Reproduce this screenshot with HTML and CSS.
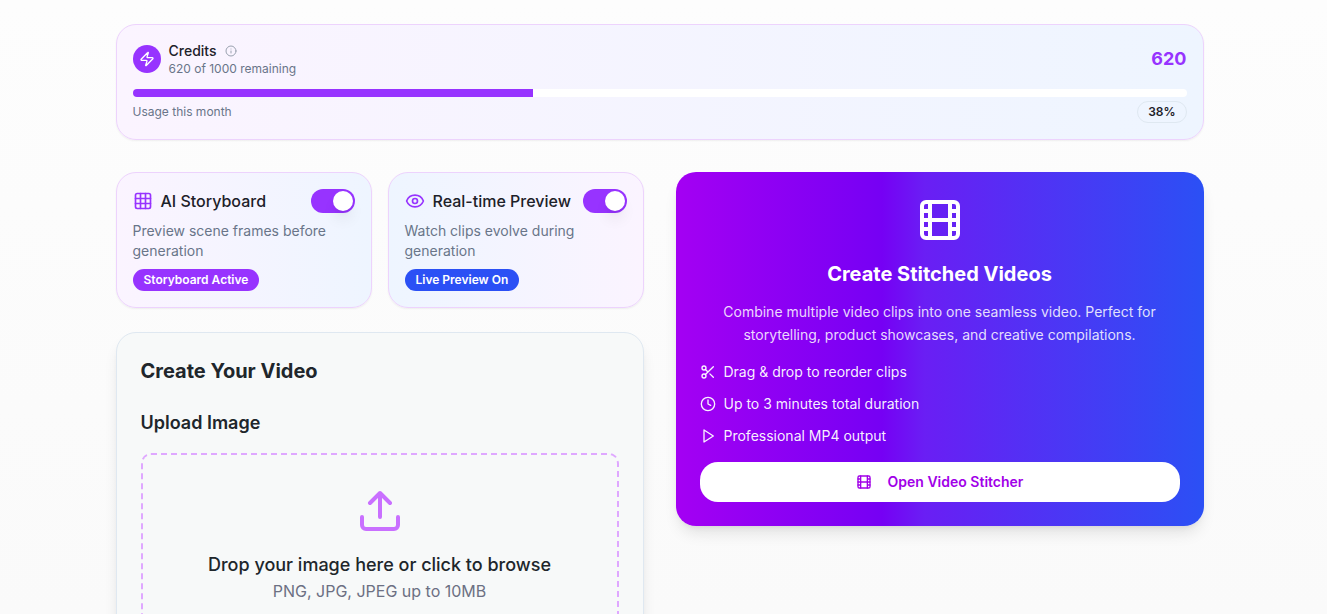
FILE: index.html
```html
<!DOCTYPE html>
<html lang="en">
<head>
<meta charset="utf-8">
<meta name="viewport" content="width=device-width, initial-scale=1">
<title>Create Your Video</title>
<link rel="stylesheet" href="styles.css">
</head>
<body>
<svg class="sprite" aria-hidden="true">
  <symbol id="film" viewBox="0 0 24 24"><rect width="18" height="18" x="3" y="3" rx="2"/><path d="M7 3v18M3 7.5h4M3 12h18M3 16.5h4M17 3v18M17 7.5h4M17 16.5h4"/></symbol>
</svg>
<main class="page">
  <section class="card credits">
    <div class="credits-head">
      <span class="credits-icon"><svg class="icon icon-16" viewBox="0 0 24 24"><path d="M4 14a1 1 0 0 1-.78-1.63l9.9-10.2a.5.5 0 0 1 .86.46l-1.92 6.02A1 1 0 0 0 13 10h7a1 1 0 0 1 .78 1.63l-9.9 10.2a.5.5 0 0 1-.86-.46l1.92-6.02A1 1 0 0 0 11 14z"/></svg></span>
      <div class="credits-text">
        <h2 class="credits-title">Credits <svg class="icon icon-12 info" viewBox="0 0 24 24"><circle cx="12" cy="12" r="10"/><path d="M12 16v-4M12 8h.01"/></svg></h2>
        <p class="small">620 of 1000 remaining</p>
      </div>
      <strong class="credits-total">620</strong>
    </div>
    <div class="bar" role="progressbar" aria-label="Usage this month" aria-valuenow="38" aria-valuemin="0" aria-valuemax="100"><div class="bar-fill" style="width:38%"></div></div>
    <div class="usage"><span class="small">Usage this month</span><span class="badge badge-outline">38%</span></div>
  </section>

  <div class="columns">
    <div class="left">
      <div class="features">
        <section class="card feature">
          <div class="feature-head">
            <svg class="icon icon-20 purple" viewBox="0 0 24 24"><rect width="18" height="18" x="3" y="3" rx="2"/><path d="M3 9h18M3 15h18M9 3v18M15 3v18"/></svg>
            <label class="feature-title" for="storyboard">AI Storyboard</label>
            <input class="switch" type="checkbox" role="switch" id="storyboard" checked>
          </div>
          <p class="feature-text">Preview scene frames before generation</p>
          <span class="badge badge-purple">Storyboard Active</span>
        </section>
        <section class="card feature feature-reverse">
          <div class="feature-head">
            <svg class="icon icon-20 purple" viewBox="0 0 24 24"><path d="M2.062 12.348a1 1 0 0 1 0-.696 10.75 10.75 0 0 1 19.876 0 1 1 0 0 1 0 .696 10.75 10.75 0 0 1-19.876 0"/><circle cx="12" cy="12" r="3"/></svg>
            <label class="feature-title" for="preview">Real-time Preview</label>
            <input class="switch" type="checkbox" role="switch" id="preview" checked>
          </div>
          <p class="feature-text">Watch clips evolve during generation</p>
          <span class="badge badge-blue">Live Preview On</span>
        </section>
      </div>
      <section class="create">
        <h1 class="create-title">Create Your Video</h1>
        <h2 class="upload-title">Upload Image</h2>
        <label class="dropzone">
          <input class="file" type="file" accept="image/png,image/jpeg">
          <svg class="icon icon-48 drop-icon" viewBox="0 0 24 24"><path d="M12 3v12M17 8l-5-5-5 5M21 15v4a2 2 0 0 1-2 2H5a2 2 0 0 1-2-2v-4"/></svg>
          <span class="drop-title">Drop your image here or click to browse</span>
          <span class="drop-hint">PNG, JPG, JPEG up to 10MB</span>
        </label>
      </section>
    </div>

    <section class="stitch">
      <svg class="icon icon-48 stitch-icon"><use href="#film"/></svg>
      <h2 class="stitch-title">Create Stitched Videos</h2>
      <p class="stitch-text">Combine multiple video clips into one seamless video. Perfect for storytelling, product showcases, and creative compilations.</p>
      <ul class="stitch-list">
        <li><svg class="icon icon-16" viewBox="0 0 24 24"><circle cx="6" cy="6" r="3"/><path d="M8.12 8.12 12 12M20 4 8.12 15.88"/><circle cx="6" cy="18" r="3"/><path d="M14.8 14.8 20 20"/></svg>Drag &amp; drop to reorder clips</li>
        <li><svg class="icon icon-16" viewBox="0 0 24 24"><circle cx="12" cy="12" r="10"/><path d="M12 6v6l4 2"/></svg>Up to 3 minutes total duration</li>
        <li><svg class="icon icon-16" viewBox="0 0 24 24"><path d="M6 3l14 9-14 9z"/></svg>Professional MP4 output</li>
      </ul>
      <button class="stitch-button" type="button"><svg class="icon icon-16"><use href="#film"/></svg>Open Video Stitcher</button>
    </section>
  </div>
</main>
</body>
</html>
```
FILE: styles.css
```css
* { box-sizing: border-box; }

html { overflow: hidden; }

body {
  margin: 0;
  padding-right: 8px;
  min-height: 100vh;
  background: linear-gradient(#fdfdfd, #fafafa) fixed;
  color: #1d2129;
  font-family: Inter, "Liberation Sans", sans-serif;
  font-size: 14px;
  line-height: 20px;
}

h1, h2, p, ul { margin: 0; padding: 0; }

.sprite { position: absolute; width: 0; height: 0; }

.icon {
  flex: none;
  fill: none;
  stroke: currentColor;
  stroke-width: 2;
  stroke-linecap: round;
  stroke-linejoin: round;
}
.icon-12 { width: 12px; height: 12px; }
.icon-16 { width: 16px; height: 16px; }
.icon-20 { width: 20px; height: 20px; }
.icon-48 { width: 48px; height: 48px; }
.purple { color: #9733ff; }

.page {
  max-width: 1152px;
  margin: 0 auto;
  padding: 24px 32px;
}

.card {
  padding: 16px;
  border: 1px solid #edd3fd;
  border-radius: 20px;
  background: linear-gradient(90deg, #fbf4ff, #eef5ff);
  box-shadow: 0 1px 2px rgba(0, 0, 0, .06);
}

.credits { margin-bottom: 32px; }
.credits-head { display: flex; align-items: center; gap: 8px; margin-bottom: 12px; }
.credits-icon {
  display: grid;
  place-items: center;
  width: 28px;
  height: 28px;
  border-radius: 50%;
  background: #9733ff;
  color: #fff;
}
.credits-text { flex: 1; }
.credits-title { display: flex; align-items: center; gap: 8px; font-size: 14px; font-weight: 500; }
.info { color: #99a1af; }
.small { color: #697589; font-size: 12px; line-height: 16px; }
.credits-total { color: #9733ff; font-size: 18px; line-height: 28px; font-weight: 700; }

.bar { height: 8px; margin-bottom: 4px; overflow: hidden; border-radius: 4px; background: #fff; }
.bar-fill { height: 100%; background: #9733ff; }
.usage { display: flex; align-items: center; justify-content: space-between; }

.badge {
  display: inline-block;
  padding: 2px 10px;
  border: 1px solid transparent;
  border-radius: 11px;
  color: #fff;
  font-size: 12px;
  line-height: 16px;
  font-weight: 600;
}
.badge-outline { border-color: #dfe8f1; color: #1d2129; }
.badge-purple { background: #9733ff; }
.badge-blue { background: #2b50f5; }

.columns { display: grid; grid-template-columns: 1fr 1fr; gap: 32px; align-items: start; }
.left { display: grid; gap: 24px; }
.features { display: grid; grid-template-columns: 1fr 1fr; gap: 16px; }

.feature { display: flex; flex-direction: column; align-items: flex-start; gap: 8px; }
.feature-reverse { background: linear-gradient(90deg, #eef5ff, #fbf4ff); }
.feature-head { display: flex; align-items: center; gap: 8px; width: 100%; }
.feature-title { flex: 1; font-size: 16px; line-height: 24px; font-weight: 500; white-space: nowrap; }
.feature-text { color: #697589; }

.switch {
  appearance: none;
  display: flex;
  flex: none;
  width: 44px;
  height: 24px;
  margin: 0;
  padding: 2px;
  border-radius: 12px;
  background: #ccd3dd;
  cursor: pointer;
}
.switch::before {
  content: "";
  width: 20px;
  height: 20px;
  border-radius: 50%;
  background: #fff;
  box-shadow: 0 10px 15px -3px rgba(0, 0, 0, .1), 0 4px 6px -4px rgba(0, 0, 0, .1);
}
.switch:checked { justify-content: flex-end; background: #9733ff; }

.create {
  padding: 24px;
  border: 1px solid #dfe8f1;
  border-radius: 20px;
  background: #f7f9f9;
  box-shadow: 0 10px 15px -3px rgba(0, 0, 0, .1), 0 4px 6px -4px rgba(0, 0, 0, .1);
  color: #20262b;
}
.create-title { margin-bottom: 24px; font-size: 20px; line-height: 28px; font-weight: 700; }
.upload-title { margin-bottom: 16px; font-size: 18px; line-height: 28px; font-weight: 600; }

.dropzone {
  display: flex;
  flex-direction: column;
  align-items: center;
  padding: 32px;
  border: 2px dashed #dfa8ff;
  border-radius: 10px;
  text-align: center;
  cursor: pointer;
}
.file { position: absolute; width: 1px; height: 1px; opacity: 0; }
.drop-icon { margin-bottom: 16px; color: #c970ff; }
.drop-title { font-size: 18px; line-height: 28px; font-weight: 500; }
.drop-hint { color: #6c7083; font-size: 16px; line-height: 24px; }

.stitch {
  display: flex;
  flex-direction: column;
  padding: 24px;
  border-radius: 20px;
  background: linear-gradient(90deg, #a400f3, #7600f4 39%, #6a1ef4 47%, #2b50f5);
  box-shadow: 0 10px 15px -3px rgba(0, 0, 0, .1), 0 4px 6px -4px rgba(0, 0, 0, .1);
  color: #fff;
}
.stitch-icon { align-self: center; margin-bottom: 16px; }
.stitch-title { margin-bottom: 12px; font-size: 20px; line-height: 28px; font-weight: 700; text-align: center; }
.stitch-text { margin-bottom: 16px; color: rgba(255, 255, 255, .85); line-height: 23px; text-align: center; }
.stitch-list { display: grid; gap: 12px; margin-bottom: 16px; list-style: none; }
.stitch-list li { display: flex; align-items: center; gap: 8px; color: rgba(255, 255, 255, .95); }
.stitch-button {
  display: flex;
  align-items: center;
  justify-content: center;
  gap: 16px;
  padding: 10px 16px;
  border: 0;
  border-radius: 18px;
  background: #fff;
  color: #a100e8;
  font: inherit;
  font-weight: 600;
  cursor: pointer;
}
```
